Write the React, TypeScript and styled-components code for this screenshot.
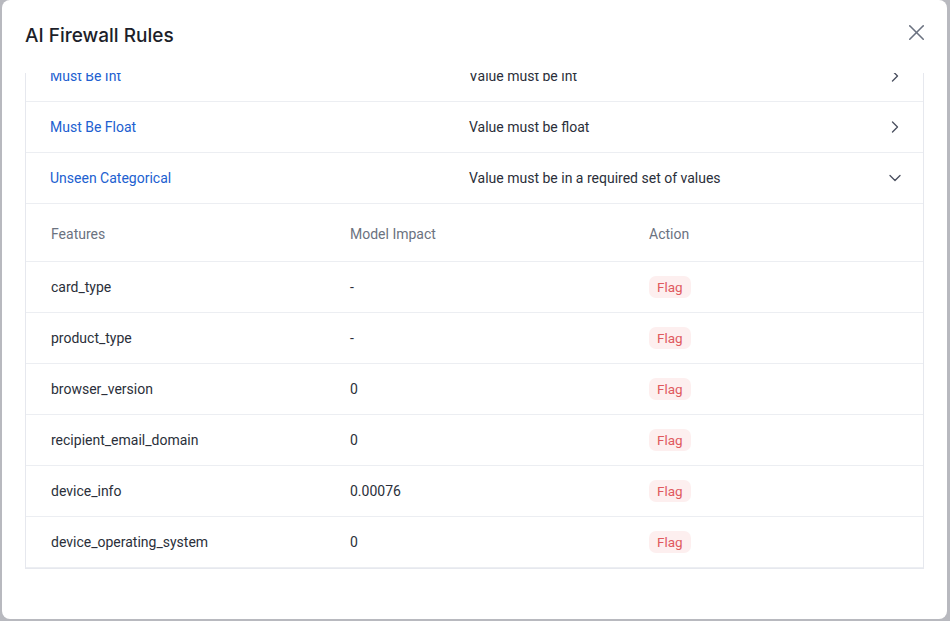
import { useLayoutEffect, useRef } from 'react'
import styled, { createGlobalStyle } from 'styled-components'
import { ChevronDown, ChevronRight, X } from 'lucide-react'

const GlobalStyle = createGlobalStyle`
  html, body {
    margin: 0;
    padding: 0;
    background: #b8b9bf;
    font-family: Roboto, 'Liberation Sans', sans-serif;
  }
  * { box-sizing: border-box; }
`

const Backdrop = styled.div`
  height: 621px;
  padding: 0 3px 2px 2px;
  display: flex;
`

const Modal = styled.div`
  flex: 1;
  background: #fff;
  border-radius: 8px;
  display: flex;
  flex-direction: column;
  padding-bottom: 24px;
  overflow: hidden;
`

const Header = styled.div`
  display: flex;
  justify-content: space-between;
  align-items: flex-start;
  padding: 23px 17px 0 23px;
  height: 73px;
`

const Title = styled.h2`
  margin: 0;
  font-family: Inter, Roboto, sans-serif;
  font-size: 19px;
  line-height: 26px;
  font-weight: 500;
  color: #1d1f2a;
`

const CloseButton = styled.button`
  border: 0;
  background: none;
  padding: 0;
  margin-top: -4px;
  color: #6b7280;
  display: flex;
  cursor: pointer;
`

const Body = styled.div`
  flex: 1;
  overflow-y: auto;
  scrollbar-width: none;
  padding: 0 23px 26px 23px;
  &::-webkit-scrollbar { display: none; }
`

const RuleList = styled.div`
  border: 1px solid #e6e8ee;
  border-top: 0;
`

const RuleRow = styled.div`
  display: grid;
  grid-template-columns: 419px 1fr 20px;
  align-items: center;
  height: 51px;
  padding: 0 18px 0 24px;
  border-bottom: 1px solid #eceef2;
  font-size: 14px;
  color: #2b2f3a;
  cursor: pointer;
`

const RuleName = styled.span`
  color: #2160d0;
`

const Chevron = styled.span`
  display: flex;
  justify-content: center;
  color: #4b5060;
`

const Table = styled.table`
  width: 100%;
  border-collapse: collapse;
  table-layout: fixed;
  font-size: 14px;
`

const Th = styled.th`
  text-align: left;
  font-weight: 400;
  color: #6b7280;
  height: 57px;
  padding: 3px 25px 0;
  border-bottom: 1px solid #eceef2;
`

const Td = styled.td`
  height: 51px;
  padding: 0 25px;
  color: #2b2f3a;
  border-bottom: 1px solid #eceef2;
`

const Badge = styled.span`
  display: inline-block;
  padding: 2px 8px;
  line-height: 18px;
  border-radius: 7px;
  font-size: 13.5px;
  background: #fdefef;
  color: #e05a5e;
`

const rules = [
  { name: 'Missing Values', desc: 'Value must not be missing' },
  { name: 'Must Be Int', desc: 'Value must be int' },
  { name: 'Must Be Float', desc: 'Value must be float' },
]

const features = [
  { name: 'card_type', impact: '-' },
  { name: 'product_type', impact: '-' },
  { name: 'browser_version', impact: '0' },
  { name: 'recipient_email_domain', impact: '0' },
  { name: 'device_info', impact: '0.00076' },
  { name: 'device_operating_system', impact: '0' },
]

export default function App() {
  const bodyRef = useRef<HTMLDivElement>(null)

  // the modal is shown scrolled down to the open rule
  useLayoutEffect(() => {
    const el = bodyRef.current
    if (el) el.scrollTop = el.scrollHeight
  }, [])

  return (
    <>
      <GlobalStyle />
      <Backdrop>
        <Modal>
          <Header>
            <Title>AI Firewall Rules</Title>
            <CloseButton aria-label='Close'>
              <X size={27} strokeWidth={1.4} />
            </CloseButton>
          </Header>
          <Body ref={bodyRef}>
            <RuleList>
              {rules.map((r) => (
                <RuleRow key={r.name}>
                  <RuleName>{r.name}</RuleName>
                  <span>{r.desc}</span>
                  <Chevron>
                    <ChevronRight size={20} strokeWidth={1.6} />
                  </Chevron>
                </RuleRow>
              ))}
              <RuleRow>
                <RuleName>Unseen Categorical</RuleName>
                <span>Value must be in a required set of values</span>
                <Chevron>
                  <ChevronDown size={20} strokeWidth={1.6} />
                </Chevron>
              </RuleRow>
              <Table>
                <thead>
                  <tr>
                    <Th>Features</Th>
                    <Th>Model Impact</Th>
                    <Th>Action</Th>
                  </tr>
                </thead>
                <tbody>
                  {features.map((f) => (
                    <tr key={f.name}>
                      <Td>{f.name}</Td>
                      <Td>{f.impact}</Td>
                      <Td>
                        <Badge>Flag</Badge>
                      </Td>
                    </tr>
                  ))}
                </tbody>
              </Table>
            </RuleList>
          </Body>
        </Modal>
      </Backdrop>
    </>
  )
}
